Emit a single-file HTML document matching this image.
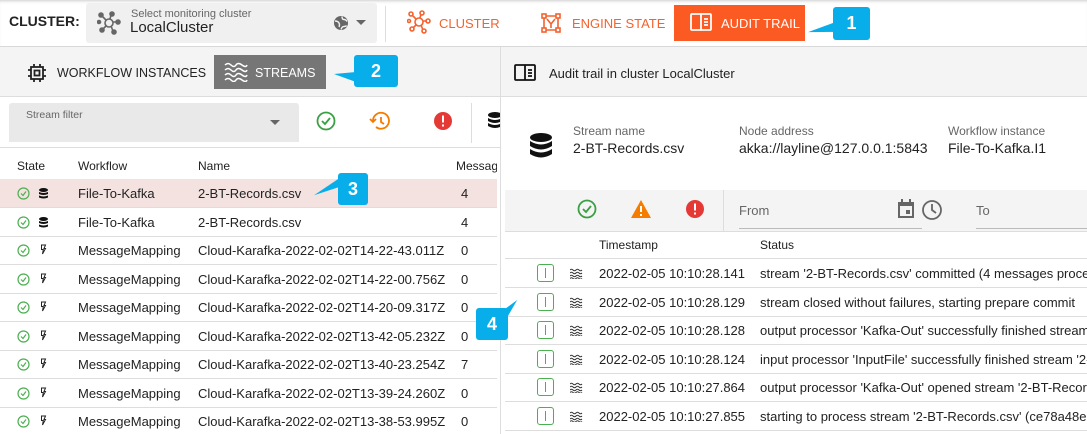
<!DOCTYPE html>
<html style="overflow:hidden"><head><meta charset="utf-8"><style>
*{box-sizing:border-box;margin:0;padding:0}
html,body{width:1087px;height:434px;overflow:hidden}
body{background:#fff;font-family:"Liberation Sans",Roboto,sans-serif;color:#222;position:relative;font-size:13px}
.a{position:absolute}
.t{position:absolute;white-space:nowrap}
.hl{position:absolute;height:1px;background:#ddd}
.call{position:absolute;background:#08aeea;color:#fff;font-weight:bold;font-size:18px;text-align:center;border-radius:3px}
</style></head><body>
<!-- top bar -->
<div class="a" style="left:0;top:0;width:1087px;height:47px;background:#fff;border-bottom:1px solid #d8d8d8;box-shadow:inset 0 3px 3px -2px #ccc"></div>
<div class="t" style="left:9px;top:13px;font-weight:bold;font-size:14px">CLUSTER:</div>
<div class="a" style="left:86px;top:3px;width:291px;height:40px;background:#f0f0f0;border-radius:3px"></div>
<svg class="a" style="left:97px;top:11px" width="24" height="24" viewBox="0 0 24 24" fill="none" stroke="#666" stroke-width="1.6"><circle cx="12" cy="12" r="4"/><circle cx="4" cy="4" r="2" fill="#666"/><circle cx="15" cy="3" r="2" fill="#666"/><circle cx="21" cy="11" r="2" fill="#666"/><circle cx="17" cy="21" r="2" fill="#666"/><circle cx="5" cy="19" r="2" fill="#666"/><circle cx="2" cy="11" r="1.5" fill="#666"/><path d="M5 5l4 4M14 4l-1 4M20 11h-4M16 20l-2-5M6 18l3-3"/></svg>
<div class="t" style="left:131px;top:8px;font-size:11px;color:#666">Select monitoring cluster</div>
<div class="t" style="left:130px;top:19px;font-size:15px;color:#222">LocalCluster</div>
<svg class="a" style="left:333px;top:15px" width="16" height="16" viewBox="0 0 16 16"><circle cx="8" cy="8" r="7" fill="#666"/><path d="M2 6q3 0 4 2t0 4M9 1.5q0 3 2 3t3 2M8 14.5q1-3 3-3t2.5-1" stroke="#f0f0f0" stroke-width="1.4" fill="none"/></svg>
<div class="a" style="left:356px;top:20px;border:5px solid transparent;border-top:5px solid #666"></div>
<div class="a" style="left:385px;top:6px;width:1px;height:36px;background:#ddd"></div>
<svg class="a" style="left:407px;top:10px" width="24" height="24" viewBox="0 0 24 24" fill="none" stroke="#f4622e" stroke-width="1.6"><circle cx="12" cy="12" r="4"/><circle cx="4" cy="4" r="2"/><circle cx="15" cy="3" r="2"/><circle cx="21" cy="11" r="2"/><circle cx="17" cy="21" r="2"/><circle cx="5" cy="19" r="2"/><circle cx="2" cy="11" r="1.5"/><path d="M5 5l4 4M14 4l-1 4M20 11h-4M16 20l-2-5M6 18l3-3"/></svg>
<div class="t" style="left:439px;top:16px;color:#f4622e;font-size:13px">CLUSTER</div>
<svg class="a" style="left:541px;top:13px" width="20" height="20" viewBox="0 0 20 20" fill="none" stroke="#f4622e" stroke-width="1.6"><rect x="1" y="1" width="4" height="4"/><rect x="15" y="1" width="4" height="4"/><rect x="1" y="15" width="4" height="4"/><rect x="15" y="15" width="4" height="4"/><path d="M5 3h10M5 17h10M3 5v10M17 5v10M6 6l4 5 4-5M10 11v4"/></svg>
<div class="t" style="left:572px;top:16px;color:#f4622e;font-size:13px">ENGINE STATE</div>
<div class="a" style="left:674px;top:5px;width:131px;height:36px;background:#fb5a22"></div>
<svg class="a" style="left:690px;top:13px" width="22" height="18" viewBox="0 0 22 18" fill="none" stroke="#fff" stroke-width="1.8"><rect x="1" y="1" width="20" height="16" rx="1"/><path d="M11 1v16M14 6h4M14 9h4M14 12h4"/></svg>
<div class="t" style="left:721px;top:16px;color:#fff;font-size:13px">AUDIT TRAIL</div>
<div class="a" style="left:808px;top:27px;width:0;height:0;border-top:10px solid #08aeea;border-left:28px solid transparent;transform:skewY(-20deg)"></div>
<div class="call" style="left:833px;top:7px;width:37px;height:33px;line-height:33px">1</div>

<!-- left panel -->
<div class="a" style="left:0;top:47px;width:500px;height:50px;background:#f4f4f4;border-bottom:1px solid #ddd"></div>
<svg class="a" style="left:28px;top:64px" width="18" height="18" viewBox="0 0 18 18" fill="none" stroke="#222" stroke-width="1.8"><rect x="3" y="3" width="12" height="12"/><rect x="6.5" y="6.5" width="5" height="5"/><path d="M6 0v3M12 0v3M6 15v3M12 15v3M0 6h3M0 12h3M15 6h3M15 12h3"/></svg>
<div class="t" style="left:57px;top:66px;font-size:12.5px">WORKFLOW INSTANCES</div>
<div class="a" style="left:214px;top:55px;width:112px;height:34px;background:#767676"></div>
<svg class="a" style="left:224px;top:62px" width="24" height="20" viewBox="0 0 24 20" fill="none" stroke="#fff" stroke-width="1.5"><path d="M1 3q3-3 6 0t5 0 6 0 5 0M1 8q3-3 6 0t5 0 6 0 5 0M1 13q3-3 6 0t5 0 6 0 5 0M1 18q3-3 6 0t5 0 6 0 5 0"/></svg>
<div class="t" style="left:255px;top:66px;color:#fff;font-size:12.5px">STREAMS</div>
<div class="a" style="left:334px;top:68px;width:0;height:0;border-bottom:10px solid #08aeea;border-left:22px solid transparent;transform:skewY(20deg)"></div>
<div class="call" style="left:354px;top:55px;width:44px;height:32px;line-height:32px">2</div>

<div class="a" style="left:9px;top:103px;width:290px;height:39px;background:#e9e9e9;border-radius:3px 3px 0 0"></div>
<div class="t" style="left:26px;top:109px;font-size:10.5px;color:#666">Stream filter</div>
<div class="a" style="left:270px;top:120px;border:5px solid transparent;border-top:5px solid #666"></div>
<svg class="a" style="left:316px;top:111px" width="20" height="20" viewBox="0 0 20 20" fill="none" stroke="#3aa043" stroke-width="1.8"><circle cx="10" cy="10" r="8.5"/><path d="M6 10l3 3 5-6"/></svg>
<svg class="a" style="left:369px;top:111px" width="22" height="20" viewBox="0 0 22 20" fill="none" stroke="#f57c00" stroke-width="1.8"><path d="M4 10a8 8 0 1 1 3 6"/><path d="M1 8l3 3 3-3"/><path d="M12 6v5l3 2"/></svg>
<svg class="a" style="left:433px;top:111px" width="20" height="20" viewBox="0 0 20 20"><circle cx="10" cy="10" r="9" fill="#e53935"/><rect x="9" y="4.5" width="2" height="7" fill="#fff"/><rect x="9" y="13.5" width="2" height="2" fill="#fff"/></svg>
<div class="a" style="left:471px;top:103px;width:1px;height:40px;background:#ddd"></div>
<svg class="a" style="left:488px;top:111px" width="12" height="20" viewBox="0 0 12 20" fill="#111"><ellipse cx="7" cy="4" rx="7" ry="3"/><path d="M0 7q7 4 14 0v3q-7 4-14 0zM0 12q7 4 14 0v3q-7 4-14 0z"/></svg>
<div class="hl" style="left:0;top:147px;width:500px"></div>

<div class="t" style="left:17px;top:159px;font-size:12px">State</div>
<div class="t" style="left:78px;top:159px;font-size:12px">Workflow</div>
<div class="t" style="left:198px;top:159px;font-size:12px">Name</div>
<div class="a" style="left:456px;top:159px;width:41px;overflow:hidden;white-space:nowrap;font-size:12px">Message</div>
<div class="a" style="left:0;top:179px;width:497px;height:29px;background:#f3e2e0;border-bottom:1px solid #ddd"></div>

<div id="rows"></div>
<div class="a" style="left:314px;top:182px;width:0;height:0;border-bottom:9px solid #08aeea;border-left:26px solid transparent;transform:skewY(-18deg)"></div>
<div class="call" style="left:338px;top:173px;width:30px;height:32px;line-height:32px">3</div>

<div class="a" style="left:500px;top:47px;width:1px;height:387px;background:#ddd"></div>

<!-- right panel -->
<div class="a" style="left:501px;top:47px;width:586px;height:50px;background:#f4f4f4;border-bottom:1px solid #ddd"></div>
<svg class="a" style="left:514px;top:64px" width="22" height="17" viewBox="0 0 22 17" fill="none" stroke="#111" stroke-width="1.8"><rect x="1" y="1" width="20" height="15" rx="1"/><path d="M11 1v15M14 6h4M14 9h4M14 12h4"/></svg>
<div class="t" style="left:549px;top:66px;font-size:13px">Audit trail in cluster LocalCluster</div>
<svg class="a" style="left:529px;top:133px" width="24" height="26" viewBox="0 0 24 26" fill="#111"><ellipse cx="12" cy="4.5" rx="11" ry="4.5"/><path d="M1 8q11 7 22 0v5q-11 7-22 0zM1 16q11 7 22 0v5q-11 7-22 0z"/></svg>
<div class="t" style="left:573px;top:124px;font-size:12px;color:#666">Stream name</div>
<div class="t" style="left:573px;top:140px;font-size:14px">2-BT-Records.csv</div>
<div class="t" style="left:739px;top:124px;font-size:12px;color:#666">Node address</div>
<div class="t" style="left:739px;top:140px;font-size:14px">akka://layline@127.0.0.1:5843</div>
<div class="t" style="left:948px;top:124px;font-size:12px;color:#666">Workflow instance</div>
<div class="t" style="left:948px;top:140px;font-size:14px">File-To-Kafka.I1</div>

<div class="a" style="left:505px;top:190px;width:582px;height:42px;background:#f4f4f4;border-bottom:1px solid #ddd"></div>
<svg class="a" style="left:577px;top:199px" width="20" height="20" viewBox="0 0 20 20" fill="none" stroke="#3aa043" stroke-width="1.8"><circle cx="10" cy="10" r="8.5"/><path d="M6 10l3 3 5-6"/></svg>
<svg class="a" style="left:630px;top:199px" width="22" height="20" viewBox="0 0 22 20"><path d="M11 1L21 19H1z" fill="#f57c00"/><rect x="10" y="7" width="2" height="6" fill="#fff"/><rect x="10" y="15" width="2" height="2" fill="#fff"/></svg>
<svg class="a" style="left:685px;top:199px" width="20" height="20" viewBox="0 0 20 20"><circle cx="10" cy="10" r="9" fill="#e53935"/><rect x="9" y="4.5" width="2" height="7" fill="#fff"/><rect x="9" y="13.5" width="2" height="2" fill="#fff"/></svg>
<div class="a" style="left:723px;top:190px;width:1px;height:42px;background:#ddd"></div>
<div class="t" style="left:739px;top:203px;font-size:13px;color:#666">From</div>
<div class="hl" style="left:739px;top:228px;width:183px;background:#bbb"></div>
<svg class="a" style="left:897px;top:199px" width="18" height="20" viewBox="0 0 18 20" fill="#666"><path d="M1 3h16v16H1z"/><rect x="3" y="7" width="12" height="10" fill="#f4f4f4"/><rect x="9" y="11" width="4" height="4"/><rect x="4" y="0" width="2" height="4"/><rect x="12" y="0" width="2" height="4"/></svg>
<svg class="a" style="left:921px;top:199px" width="22" height="22" viewBox="0 0 22 22" fill="none" stroke="#666" stroke-width="1.8"><circle cx="11" cy="11" r="9"/><path d="M11 5v6l4 3"/></svg>
<div class="t" style="left:976px;top:203px;font-size:13px;color:#666">To</div>
<div class="hl" style="left:976px;top:228px;width:111px;background:#bbb"></div>

<div class="t" style="left:599px;top:238px;font-size:12px">Timestamp</div>
<div class="t" style="left:760px;top:238px;font-size:12px">Status</div>
<div class="hl" style="left:505px;top:258px;width:582px"></div>
<div id="rrows"></div>
<div class="a" style="left:498px;top:300px;width:0;height:0;border-bottom:18px solid #08aeea;border-left:14px solid transparent;transform:skewX(-30deg)"></div>
<div class="call" style="left:476px;top:308px;width:32px;height:32px;line-height:32px">4</div>

<script>
var L=[["db","File-To-Kafka","2-BT-Records.csv","4"],["db","File-To-Kafka","2-BT-Records.csv","4"],["f","MessageMapping","Cloud-Karafka-2022-02-02T14-22-43.011Z","0"],["f","MessageMapping","Cloud-Karafka-2022-02-02T14-22-00.756Z","0"],["f","MessageMapping","Cloud-Karafka-2022-02-02T14-20-09.317Z","0"],["f","MessageMapping","Cloud-Karafka-2022-02-02T13-42-05.232Z","0"],["f","MessageMapping","Cloud-Karafka-2022-02-02T13-40-23.254Z","7"],["f","MessageMapping","Cloud-Karafka-2022-02-02T13-39-24.260Z","0"],["f","MessageMapping","Cloud-Karafka-2022-02-02T13-38-53.995Z","0"]];
var h="";
L.forEach(function(r,i){var y=179+i*28.5;
h+='<svg class="a" style="left:17px;top:'+(y+8)+'px" width="13" height="13" viewBox="0 0 13 13" fill="none" stroke="#4caf50" stroke-width="1.2"><circle cx="6.5" cy="6.5" r="5.5"/><path d="M4 6.5l2 2 3-4"/></svg>';
if(r[0]=="db")h+='<svg class="a" style="left:39px;top:'+(y+9)+'px" width="9" height="11" viewBox="0 0 9 11" fill="#111"><ellipse cx="4.5" cy="2" rx="4.5" ry="2"/><path d="M0 4q4.5 2 9 0v2q-4.5 2-9 0zM0 7.5q4.5 2 9 0v2q-4.5 2-9 0z"/></svg>';
else h+='<svg class="a" style="left:40px;top:'+(y+8)+'px" width="7" height="11" viewBox="0 0 7 11" fill="none" stroke="#222" stroke-width="1"><path d="M1.5 1h4L4 4.5h1.5L2.5 10l.8-4.5H1.5z"/></svg>';
h+='<div class="t" style="left:78px;top:'+(y+7)+'px">'+r[1]+'</div><div class="t" style="left:198px;top:'+(y+7)+'px">'+r[2]+'</div><div class="t" style="left:461px;top:'+(y+7)+'px">'+r[3]+'</div>';
if(i>0)h+='<div class="hl" style="left:0;top:'+(y+28)+'px;width:497px"></div>';});
document.getElementById("rows").outerHTML=h;
var R=[["2022-02-05 10:10:28.141","stream '2-BT-Records.csv' committed (4 messages processed)"],["2022-02-05 10:10:28.129","stream closed without failures, starting prepare commit"],["2022-02-05 10:10:28.128","output processor 'Kafka-Out' successfully finished stream '2-BT"],["2022-02-05 10:10:28.124","input processor 'InputFile' successfully finished stream '2-BT"],["2022-02-05 10:10:27.864","output processor 'Kafka-Out' opened stream '2-BT-Records.csv'"],["2022-02-05 10:10:27.855","starting to process stream '2-BT-Records.csv' (ce78a48e-"]];
h="";
R.forEach(function(r,i){var y=259+i*28.5;
h+='<div class="a" style="left:537px;top:'+(y+5)+'px;width:17px;height:18px;border:1px solid #4caf50;border-radius:3px"></div><div class="a" style="left:545px;top:'+(y+9)+'px;width:1px;height:10px;background:#4caf50"></div>';
h+='<svg class="a" style="left:570px;top:'+(y+9)+'px" width="13" height="11" viewBox="0 0 13 11" fill="none" stroke="#333" stroke-width="1"><path d="M0 2q1.5-1.5 3 0t3 0 3 0 3 0M0 5q1.5-1.5 3 0t3 0 3 0 3 0M0 8q1.5-1.5 3 0t3 0 3 0 3 0M0 10.5q1.5-1.5 3 0t3 0 3 0 3 0"/></svg>';
h+='<div class="t" style="left:599px;top:'+(y+7)+'px">'+r[0]+'</div><div class="a" style="left:760px;top:'+(y+7)+'px;width:327px;overflow:hidden;white-space:nowrap">'+r[1]+'</div>';
h+='<div class="hl" style="left:505px;top:'+(y+28)+'px;width:582px"></div>';});
document.getElementById("rrows").outerHTML=h;
</script>
</body></html>
